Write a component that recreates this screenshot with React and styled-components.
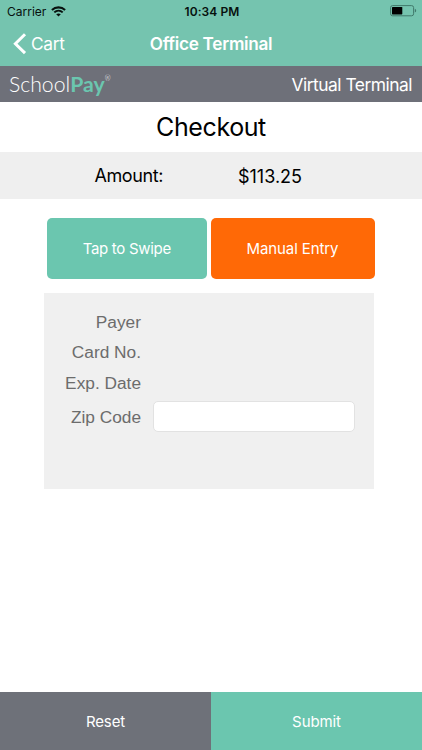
import React from 'react'
import styled, { createGlobalStyle } from 'styled-components';

const payer = [
    { label: 'Payer', height: 31 },
    { label: 'Card No.', height: 29 },
    { label: 'Exp. Date', height: 32 },
    { label: 'Zip Code', height: 37, input: true },
]

function App() {
    return (
        <Screen>
            <GlobalStyle />
            <StatusBar>
                <Carrier>
                    <span>Carrier</span>
                    <WifiIcon />
                </Carrier>
                <Clock>10:34 PM</Clock>
                <BatteryIcon />
            </StatusBar>
            <NavBar>
                <BackButton>
                    <svg width="14" height="22" viewBox="0 0 14 22" fill="none">
                        <path d="M12 1.3 2.4 10.7 12 20.1" stroke="#fff" strokeWidth="3" />
                    </svg>
                    <span>Cart</span>
                </BackButton>
                <NavTitle>Office Terminal</NavTitle>
            </NavBar>
            <BrandBar>
                <Logo>
                    <span>School</span>
                    <LogoPay>Pay</LogoPay>
                    <LogoMark>®</LogoMark>
                </Logo>
                <BrandTitle>Virtual Terminal</BrandTitle>
            </BrandBar>
            <Title>Checkout</Title>
            <AmountRow>
                <AmountLabel>Amount:</AmountLabel>
                <AmountValue>$113.25</AmountValue>
            </AmountRow>
            <EntryButtons>
                <EntryButton $bg="#6bc6af">Tap to Swipe</EntryButton>
                <EntryButton $bg="#ff6906" $wide>Manual Entry</EntryButton>
            </EntryButtons>
            <Panel>
                {payer.map(field => (
                    <Field key={field.label} $height={field.height}>
                        <FieldLabel>{field.label}</FieldLabel>
                        {field.input && <ZipInput aria-label={field.label} />}
                    </Field>
                ))}
            </Panel>
            <Footer>
                <FooterButton $bg="#6e7179">Reset</FooterButton>
                <FooterButton $bg="#6bc6af">Submit</FooterButton>
            </Footer>
        </Screen>
    )
}

function WifiIcon() {
    return (
        <svg width="15" height="11" viewBox="0 0 15 11" fill="none" stroke="#07110e">
            <path d="M.9 3.9C4.6.5 10.4.5 14.1 3.9" strokeWidth="2.1" />
            <path d="M3.3 6.4c2.4-2.3 6-2.3 8.4 0" strokeWidth="2" />
            <path d="M7.5 10.6 5.2 8.3c1.3-1.2 3.3-1.2 4.6 0z" fill="#07110e" stroke="none" />
        </svg>
    )
}

function BatteryIcon() {
    return (
        <svg width="27" height="12" viewBox="0 0 27 12" fill="none">
            <rect x=".6" y=".6" width="23" height="10.2" rx="2" stroke="#41796b" />
            <rect x="2" y="2" width="10.3" height="7.4" rx=".6" fill="#000" />
            <path d="M24.8 3.8v3.8c1.9-.6 1.9-3.2 0-3.8z" fill="#41796b" />
        </svg>
    )
}

export default App

const GlobalStyle = createGlobalStyle`
    * {
        box-sizing: border-box;
    }
    body {
        margin: 0;
        background: #fff;
        font-family: Inter, "Liberation Sans", sans-serif;
    }
    button {
        border: 0;
        padding: 0;
        font-family: inherit;
        color: #fff;
    }
    svg {
        display: block;
        flex: none;
    }
`

const Screen = styled.div`
    display: flex;
    flex-direction: column;
    width: 422px;
    height: 750px;
    overflow: hidden;
    white-space: nowrap;
`

const StatusBar = styled.div`
    display: grid;
    grid-template-columns: 1fr auto 1fr;
    align-items: center;
    height: 22px;
    padding: 0 5px 0 7px;
    background: #75c4af;
    color: #07110e;
    font-size: 12px;

    > svg {
        justify-self: end;
    }
`

const Carrier = styled.div`
    display: flex;
    align-items: center;
    gap: 5px;
`

const Clock = styled.div`
    font-weight: 600;
    letter-spacing: 0.1px;
`

const NavBar = styled.div`
    display: grid;
    grid-template-columns: 1fr auto 1fr;
    align-items: center;
    height: 44px;
    padding: 0 13px;
    background: #75c4af;
    color: #fff;
`

const BackButton = styled.button`
    display: flex;
    align-items: center;
    gap: 4px;
    background: none;
    font-size: 17.3px;
    letter-spacing: -0.3px;
    line-height: 20px;
`

const NavTitle = styled.div`
    padding-bottom: 2px;
    font-size: 17.2px;
    font-weight: 600;
    letter-spacing: -0.3px;
`

const BrandBar = styled.div`
    display: flex;
    justify-content: space-between;
    align-items: center;
    height: 36px;
    padding: 0 10px 0 9px;
    background: #6e7079;
    color: #fff;
`

const Logo = styled.div`
    display: flex;
    font-family: Lato, sans-serif;
    font-size: 21.2px;
    font-weight: 300;
`

const LogoPay = styled.span`
    color: #6bc6af;
    font-weight: 700;
`

const LogoMark = styled.span`
    font-size: 7px;
    line-height: 14px;
`

const BrandTitle = styled.div`
    font-size: 17.4px;
    letter-spacing: -0.5px;
`

const Title = styled.h1`
    height: 50px;
    margin: 0;
    color: #000;
    font-size: 25px;
    font-weight: 400;
    letter-spacing: -0.4px;
    line-height: 50px;
    text-align: center;
`

const AmountRow = styled.div`
    display: grid;
    grid-template-columns: 163px 1fr;
    column-gap: 75px;
    align-items: center;
    height: 47px;
    background: #efefef;
    color: #000;
    font-size: 18px;
`

const AmountLabel = styled.div`
    letter-spacing: -0.4px;
    text-align: right;
`

const AmountValue = styled.div`
    padding-top: 1px;
`

const EntryButtons = styled.div`
    display: flex;
    gap: 4px;
    margin: 19px 47px 0;
`

const EntryButton = styled.button`
    width: ${props => props.$wide ? '164px' : '159.5px'};
    height: 61px;
    border-radius: 5px;
    background: ${props => props.$bg};
    font-size: 15px;
    letter-spacing: ${props => props.$wide ? '-0.1px' : '-0.3px'};
`

const Panel = styled.div`
    width: 330px;
    height: 196px;
    margin: 14px 0 0 44px;
    padding-top: 13px;
    background: #f0f0f0;
`

const Field = styled.div`
    display: grid;
    grid-template-columns: 97px 202px;
    column-gap: 12px;
    align-items: center;
    height: ${props => props.$height}px;
`

const FieldLabel = styled.label`
    padding-top: 2px;
    color: #6c6c6c;
    font-family: "Liberation Sans", Arial, sans-serif;
    font-size: 17.3px;
    text-align: right;
`

const ZipInput = styled.input`
    width: 202px;
    height: 31px;
    border: 1px solid #e2e2e2;
    border-radius: 5px;
    background: #fff;
`

const Footer = styled.div`
    display: grid;
    grid-template-columns: 1fr 1fr;
    height: 58px;
    margin-top: auto;
`

const FooterButton = styled.button`
    background: ${props => props.$bg};
    font-size: 15px;
    letter-spacing: -0.1px;
`
